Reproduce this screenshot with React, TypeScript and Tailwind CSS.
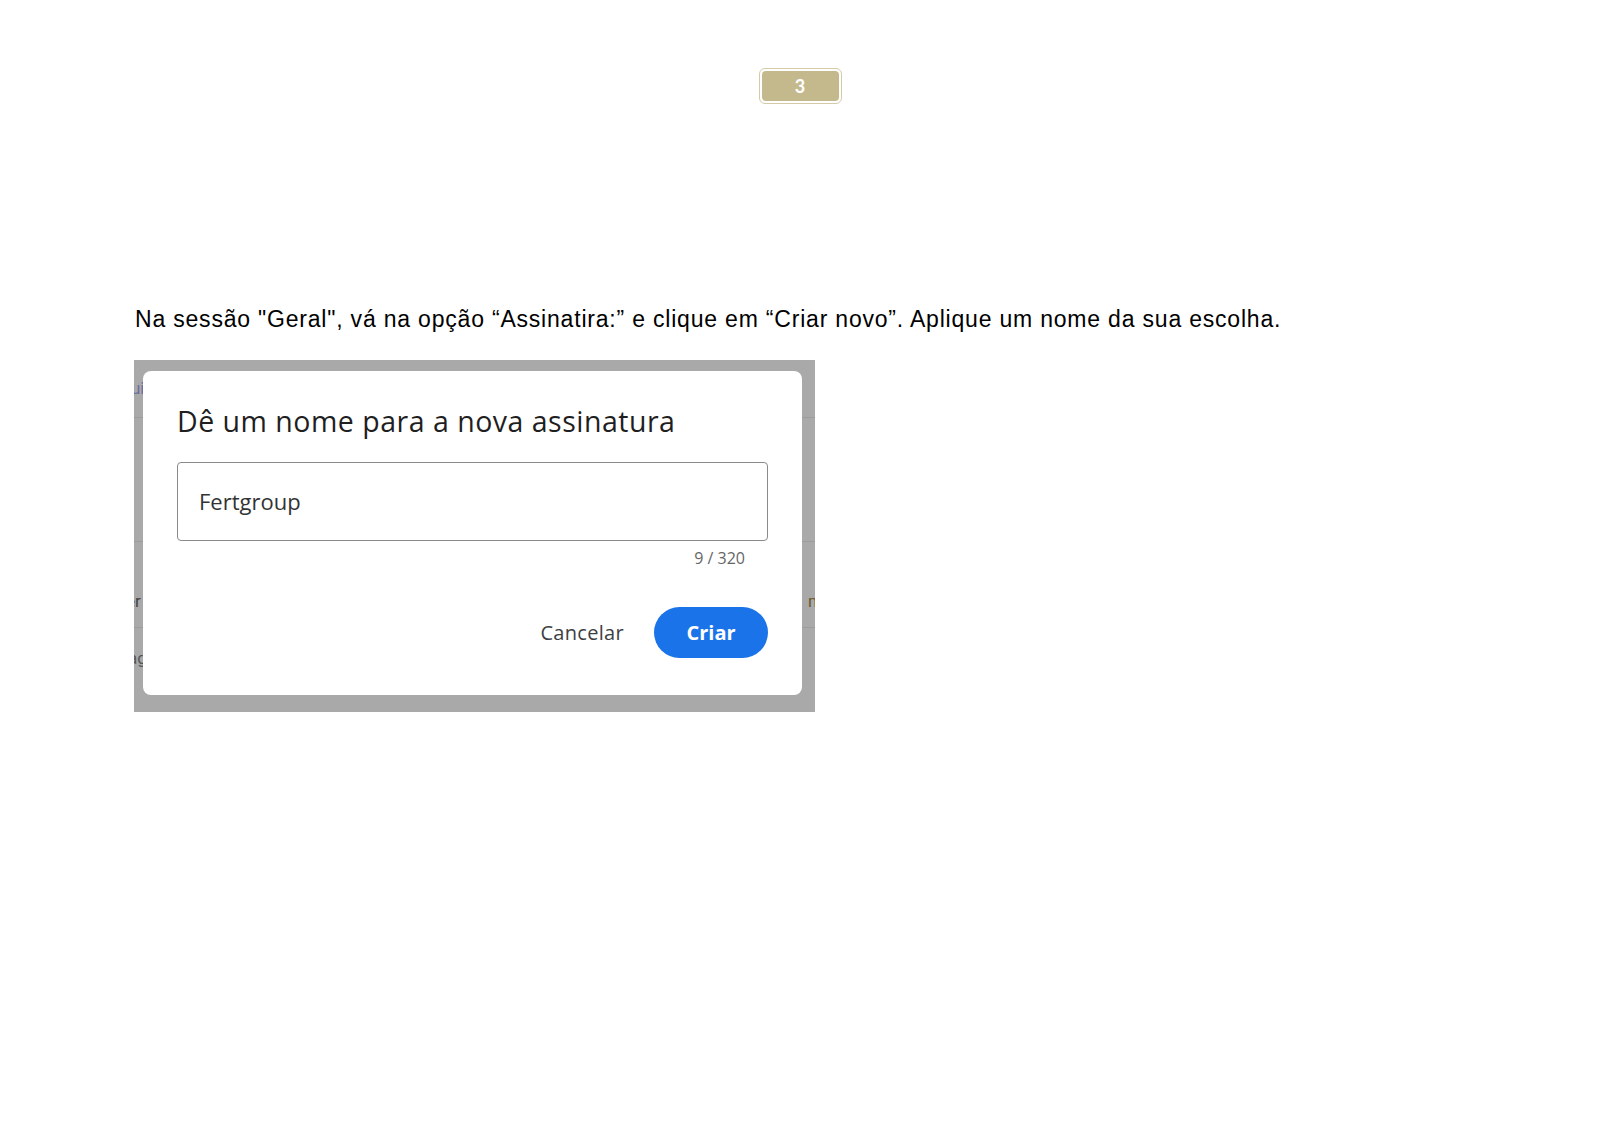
import React from "react";

const PageBadge: React.FC<{ n: number }> = ({ n }) => (
    <div className="w-[83px] h-[36px] rounded-[6px] border border-[#d3cba8] p-[2px] bg-white">
        <div className="w-full h-full rounded-[4px] bg-[#c4b98c] flex items-center justify-center text-white font-bold text-[18px] font-['Lato',sans-serif]">
            {n}
        </div>
    </div>
);

const SignatureDialog: React.FC = () => (
    <div className="relative w-[681px] h-[352px] bg-[#a9a9a9] overflow-hidden">
        {/* the dimmed settings page behind the dialog */}
        <div className="flex flex-col h-full text-[17px] font-['Roboto',sans-serif]">
            <div className="h-[58px] border-b border-[#9c9c9c] flex items-center px-[1px]">
                <span className="text-[#6d6f9e] -ml-[4px]">ui</span>
            </div>
            <div className="h-[124px] border-b border-[#9c9c9c]" />
            <div className="h-[86px] border-b border-[#9c9c9c] flex items-center justify-between pt-[34px]">
                <span className="text-[#444] -ml-[8px]">er</span>
                <span className="text-[#6b5a2a] -mr-[8px]">m</span>
            </div>
            <div className="flex-1 flex items-start pt-[18px]">
                <span className="text-[#555] -ml-[6px]">ag</span>
            </div>
        </div>

        {/* modal */}
        <div className="absolute left-[9px] top-[11px] w-[659px] h-[324px] bg-white rounded-[8px] px-[34px] pt-[30px] font-['Open_Sans',sans-serif]">
            <h2 className="text-[28.5px] leading-[40px] text-[#1f1f1f] tracking-[0.5px]">Dê um nome para a nova assinatura</h2>
            <div className="mt-[21px] h-[79px] border border-[#8a8a8a] rounded-[4px] flex items-center px-[21px] text-[22px] text-[#333]">
                Fertgroup
            </div>
            <div className="flex justify-end pr-[23px] mt-[5px] text-[16px] text-[#666]">9 / 320</div>
            <div className="flex justify-end items-center gap-[30px] mt-[37px]">
                <button className="text-[20px] tracking-[0.3px] text-[#3c4043]">Cancelar</button>
                <button className="w-[114px] h-[51px] rounded-full bg-[#1a73e8] text-white text-[20px] font-bold">Criar</button>
            </div>
        </div>
    </div>
);

export default function App() {
    return (
        <div className="w-[1600px] min-h-[1131px] bg-white">
            <div className="flex justify-center pt-[68px]">
                <PageBadge n={3} />
            </div>
            <div className="pl-[135px] pt-[200px]">
                <p className="text-[23px] leading-[30px] tracking-[0.8px] text-black font-['Liberation_Sans',Arial,sans-serif]">
                    Na sessão "Geral", vá na opção “Assinatira:” e clique em “Criar novo”. Aplique um nome da sua escolha.
                </p>
                <div className="mt-[26px] -ml-[1px]">
                    <SignatureDialog />
                </div>
            </div>
        </div>
    );
}
